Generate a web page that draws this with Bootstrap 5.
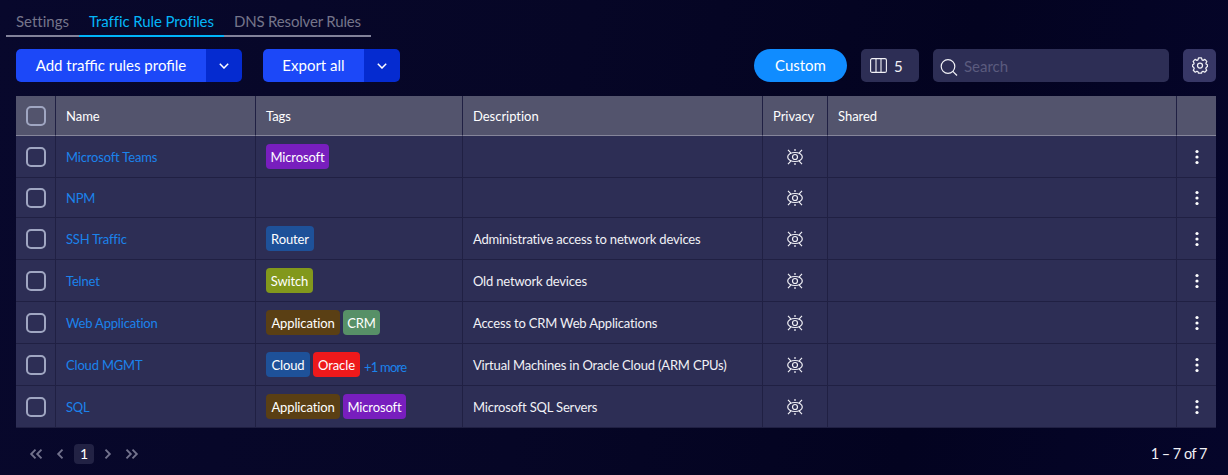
<!DOCTYPE html>
<html lang="en">
<head>
<meta charset="utf-8">
<meta name="viewport" content="width=device-width, initial-scale=1">
<title>Traffic Rule Profiles</title>
<link rel="stylesheet" href="https://cdn.jsdelivr.net/npm/bootstrap@5.3.0/dist/css/bootstrap.min.css">
<style>
body{font-family:Lato,"Open Sans",sans-serif;font-size:13px;line-height:20px;color:#f1f1f6;height:475px;overflow:hidden;font-variant-ligatures:none;background:linear-gradient(100deg,#08082c 0%,#060626 45%,#030320 75%,#05052a 100%)}
svg{display:block;fill:none;stroke:currentColor;flex:none}
.tabs{margin-left:6px;height:37px}
.tabs .nav-link{padding:11px 0 0 10px;height:37px;font-size:15px;line-height:20px;white-space:nowrap;color:#75758a;border-bottom:2px solid #82829a}
.tabs .nav-link.active{color:#04b5f8;border-color:#00b4fa;letter-spacing:-.1px}
.tab-settings{width:73px}.tab-traffic{width:145px}.tab-dns{width:147px;letter-spacing:-.18px}
.toolbar{margin:12px 12px 0 16px;height:33px}
.split{height:33px;border-radius:5px;overflow:hidden}
.split .btn{border:0;border-radius:0;padding:0;background:#1c48f8;color:#fff;font-size:15px;line-height:33px;height:33px}
.split .btn+.btn{background:#052bd0;width:36px}
.add-main{width:190px}.export-main{width:101px}
.pill{width:93px;height:33px;border:0;padding:0;background:#108cff;color:#fff;font-size:15px;line-height:33px}
.tool{background:#2d2e55;border-radius:5px;height:33px}
.cols{width:58px;font-size:15px;padding-left:9px;gap:7px}
.find{width:236px;padding-left:7px;gap:6px}
.find input{background:none;border:0;outline:0;color:#fff;padding:0;width:190px;font-size:15px;line-height:20px}
.find input::placeholder{color:#5b5b7e;opacity:1}
.gear{width:33px;background:#373766}
.grid-table{table-layout:fixed;width:1200px;margin:14px 0 0 16px;border-collapse:separate;border-spacing:0}
.grid-table th,.grid-table td{padding:0 10px;border-right:1px solid #202043;border-bottom:1px solid #202043;background:#2d2e55;height:42px;font-weight:400;vertical-align:middle;white-space:nowrap;letter-spacing:-.18px}
.grid-table th{background:#53546d;height:40px;border-bottom-color:#85859a;color:#fff;letter-spacing:-.03px}
.grid-table tr.short td{height:40px}
.grid-table th:last-child,.grid-table td:last-child{border-right:0}
.grid-table td:last-child{padding-right:10px}
.grid-table .name-link,.grid-table .more{color:#1b83ec;text-decoration:none}
.box{display:block;width:20px;height:20px;border:2px solid #a0a6c2;border-radius:5px}
.tag{height:25px;line-height:26px;border-radius:4px;text-align:center;color:#fff;letter-spacing:-.12px}
.t-ms{background:#781ebe;width:63px}.t-router{background:#1e5199;width:48px}.t-switch{background:#82981c;width:47px}
.t-app{background:#5a3f14;width:74px}.t-crm{background:#579067;width:37px}.t-cloud{background:#1e5199;width:44px}.t-oracle{background:#ee191b;width:47px}
.grid-table .more{margin:5px 0 0 1px;letter-spacing:-.8px}
.pager{margin:16px 21px 0 29px;height:20px;color:#72728c}
.page-now{width:20px;height:20px;border-radius:4px;background:#222244;color:#fff;font-size:14px;margin:0 10px}
.step-in{margin-left:13px}
.count{color:#f1f1f6;font-size:14.5px;letter-spacing:-.5px}
</style>
</head>
<body>
<svg width="0" height="0" class="position-absolute">
<symbol id="eye" viewBox="0 0 16 16"><g stroke-width="1.2"><ellipse cx="8" cy="8" rx="7.3" ry="4.5"/><circle cx="8" cy="8" r="2.5"/><path d="M8 0v2M8 14v2M1 .9l2.8 2.9M15 .9l-2.8 2.9M1 15.1l2.8-2.9M15 15.1l-2.8-2.9"/></g></symbol>
<symbol id="dots" viewBox="0 0 4 16"><g fill="#fff" stroke="none"><circle cx="2" cy="2.5" r="1.6"/><circle cx="2" cy="8" r="1.6"/><circle cx="2" cy="13.5" r="1.6"/></g></symbol>
<symbol id="down" viewBox="0 0 10 6"><path d="M.8.8 5 5 9.2.8"/></symbol>
</svg>
<nav class="nav tabs flex-nowrap">
<a class="nav-link tab-settings">Settings</a><a class="nav-link active tab-traffic">Traffic Rule Profiles</a><a class="nav-link tab-dns">DNS Resolver Rules</a>
</nav>
<div class="toolbar d-flex">
<div class="split d-flex"><button class="btn add-main">Add traffic rules profile</button><button class="btn d-flex align-items-center justify-content-center"><svg width="10" height="6" stroke-width="1.5"><use href="#down"/></svg></button></div>
<div class="split d-flex" style="margin-left:21px"><button class="btn export-main">Export all</button><button class="btn d-flex align-items-center justify-content-center"><svg width="10" height="6" stroke-width="1.5"><use href="#down"/></svg></button></div>
<div class="d-flex ms-auto" style="gap:14px">
<button class="pill rounded-pill">Custom</button>
<div class="tool cols d-flex align-items-center"><svg width="17" height="15" viewBox="0 0 17 15" stroke-width="1.1"><rect x=".6" y=".6" width="15.8" height="13.8" rx="1.5"/><path d="M6 .6v13.8M11 .6v13.8"/></svg>5</div>
<div class="tool find d-flex align-items-center"><svg width="18" height="18" viewBox="0 0 18 18" stroke-width="1.2" class="mt-1"><circle cx="8" cy="7.5" r="6.8"/><path d="m12.8 12.3 4.2 4.2"/></svg><input placeholder="Search"></div>
<div class="tool gear d-flex align-items-center justify-content-center"><svg width="16" height="17" viewBox="0 0 16 17" stroke-width="1.25" stroke-linejoin="round"><circle cx="8" cy="8.5" r="2.5"/><path d="M6.5.9h3l.5 2 1.1.5 1.8-1 1.9 2-.9 1.9.4 1 1.1.5v1.8l-1.2.9-.4 1 .9 1.7-2 2-1.7-1-1 .5-.5 1.5h-3L6 14.7l-1-.5-1.7 1-2-2 .9-1.7-.4-1-1.2-.9V7.8l1.1-.5.4-1-.9-1.9 1.9-2 1.8 1L6 2.9z"/></svg></div>
</div>
</div>
<table class="grid-table">
<colgroup><col style="width:40px"><col style="width:200px"><col style="width:207px"><col style="width:300px"><col style="width:65px"><col style="width:349px"><col style="width:39px"></colgroup>
<thead><tr><th><span class="box"></span></th><th>Name</th><th>Tags</th><th>Description</th><th>Privacy</th><th>Shared</th><th></th></tr></thead>
<tbody id="rows"></tbody>
</table>
<div class="pager d-flex align-items-center">
<svg width="14" height="10" stroke-width="1.9"><path d="M6.5.7 2.2 5l4.3 4.3M12.5.7 8.2 5l4.3 4.3"/></svg>
<svg class="step-in" width="8" height="10" stroke-width="1.9"><path d="M6.5.7 2.2 5l4.3 4.3"/></svg>
<div class="page-now d-flex align-items-center justify-content-center">1</div>
<svg width="8" height="10" stroke-width="1.9"><path d="M1.5.7 5.8 5 1.5 9.3"/></svg>
<svg class="step-in" width="14" height="10" stroke-width="1.9"><path d="M1.5.7 5.8 5 1.5 9.3M7.5.7l4.3 4.3-4.3 4.3"/></svg>
<span class="count ms-auto">1 – 7 of 7</span>
</div>
<script src="https://cdn.jsdelivr.net/npm/bootstrap@5.3.0/dist/js/bootstrap.bundle.min.js"></script>
<script>
const kinds={Microsoft:'ms',Router:'router',Switch:'switch',Application:'app',CRM:'crm',Cloud:'cloud',Oracle:'oracle'};
const data=[['Microsoft Teams',['Microsoft'],''],['NPM',[],''],['SSH Traffic',['Router'],'Administrative access to network devices'],['Telnet',['Switch'],'Old network devices'],['Web Application',['Application','CRM'],'Access to CRM Web Applications'],['Cloud MGMT',['Cloud','Oracle'],'Virtual Machines in Oracle Cloud (ARM CPUs)',1],['SQL',['Application','Microsoft'],'Microsoft SQL Servers']];
document.getElementById('rows').innerHTML=data.map((r,i)=>`<tr class="${i==1?'short':''}"><td><span class="box"></span></td><td><a class="name-link">${r[0]}</a></td><td><div class="d-flex" style="gap:3px">${r[1].map(t=>`<span class="tag t-${kinds[t]}">${t}</span>`).join('')}${r[3]?'<a class="more">+1 more</a>':''}</div></td><td>${r[2]}</td><td><svg class="mx-auto" width="16" height="16"><use href="#eye"/></svg></td><td></td><td><svg class="mx-auto" width="4" height="16"><use href="#dots"/></svg></td></tr>`).join('');
</script>
</body>
</html>
